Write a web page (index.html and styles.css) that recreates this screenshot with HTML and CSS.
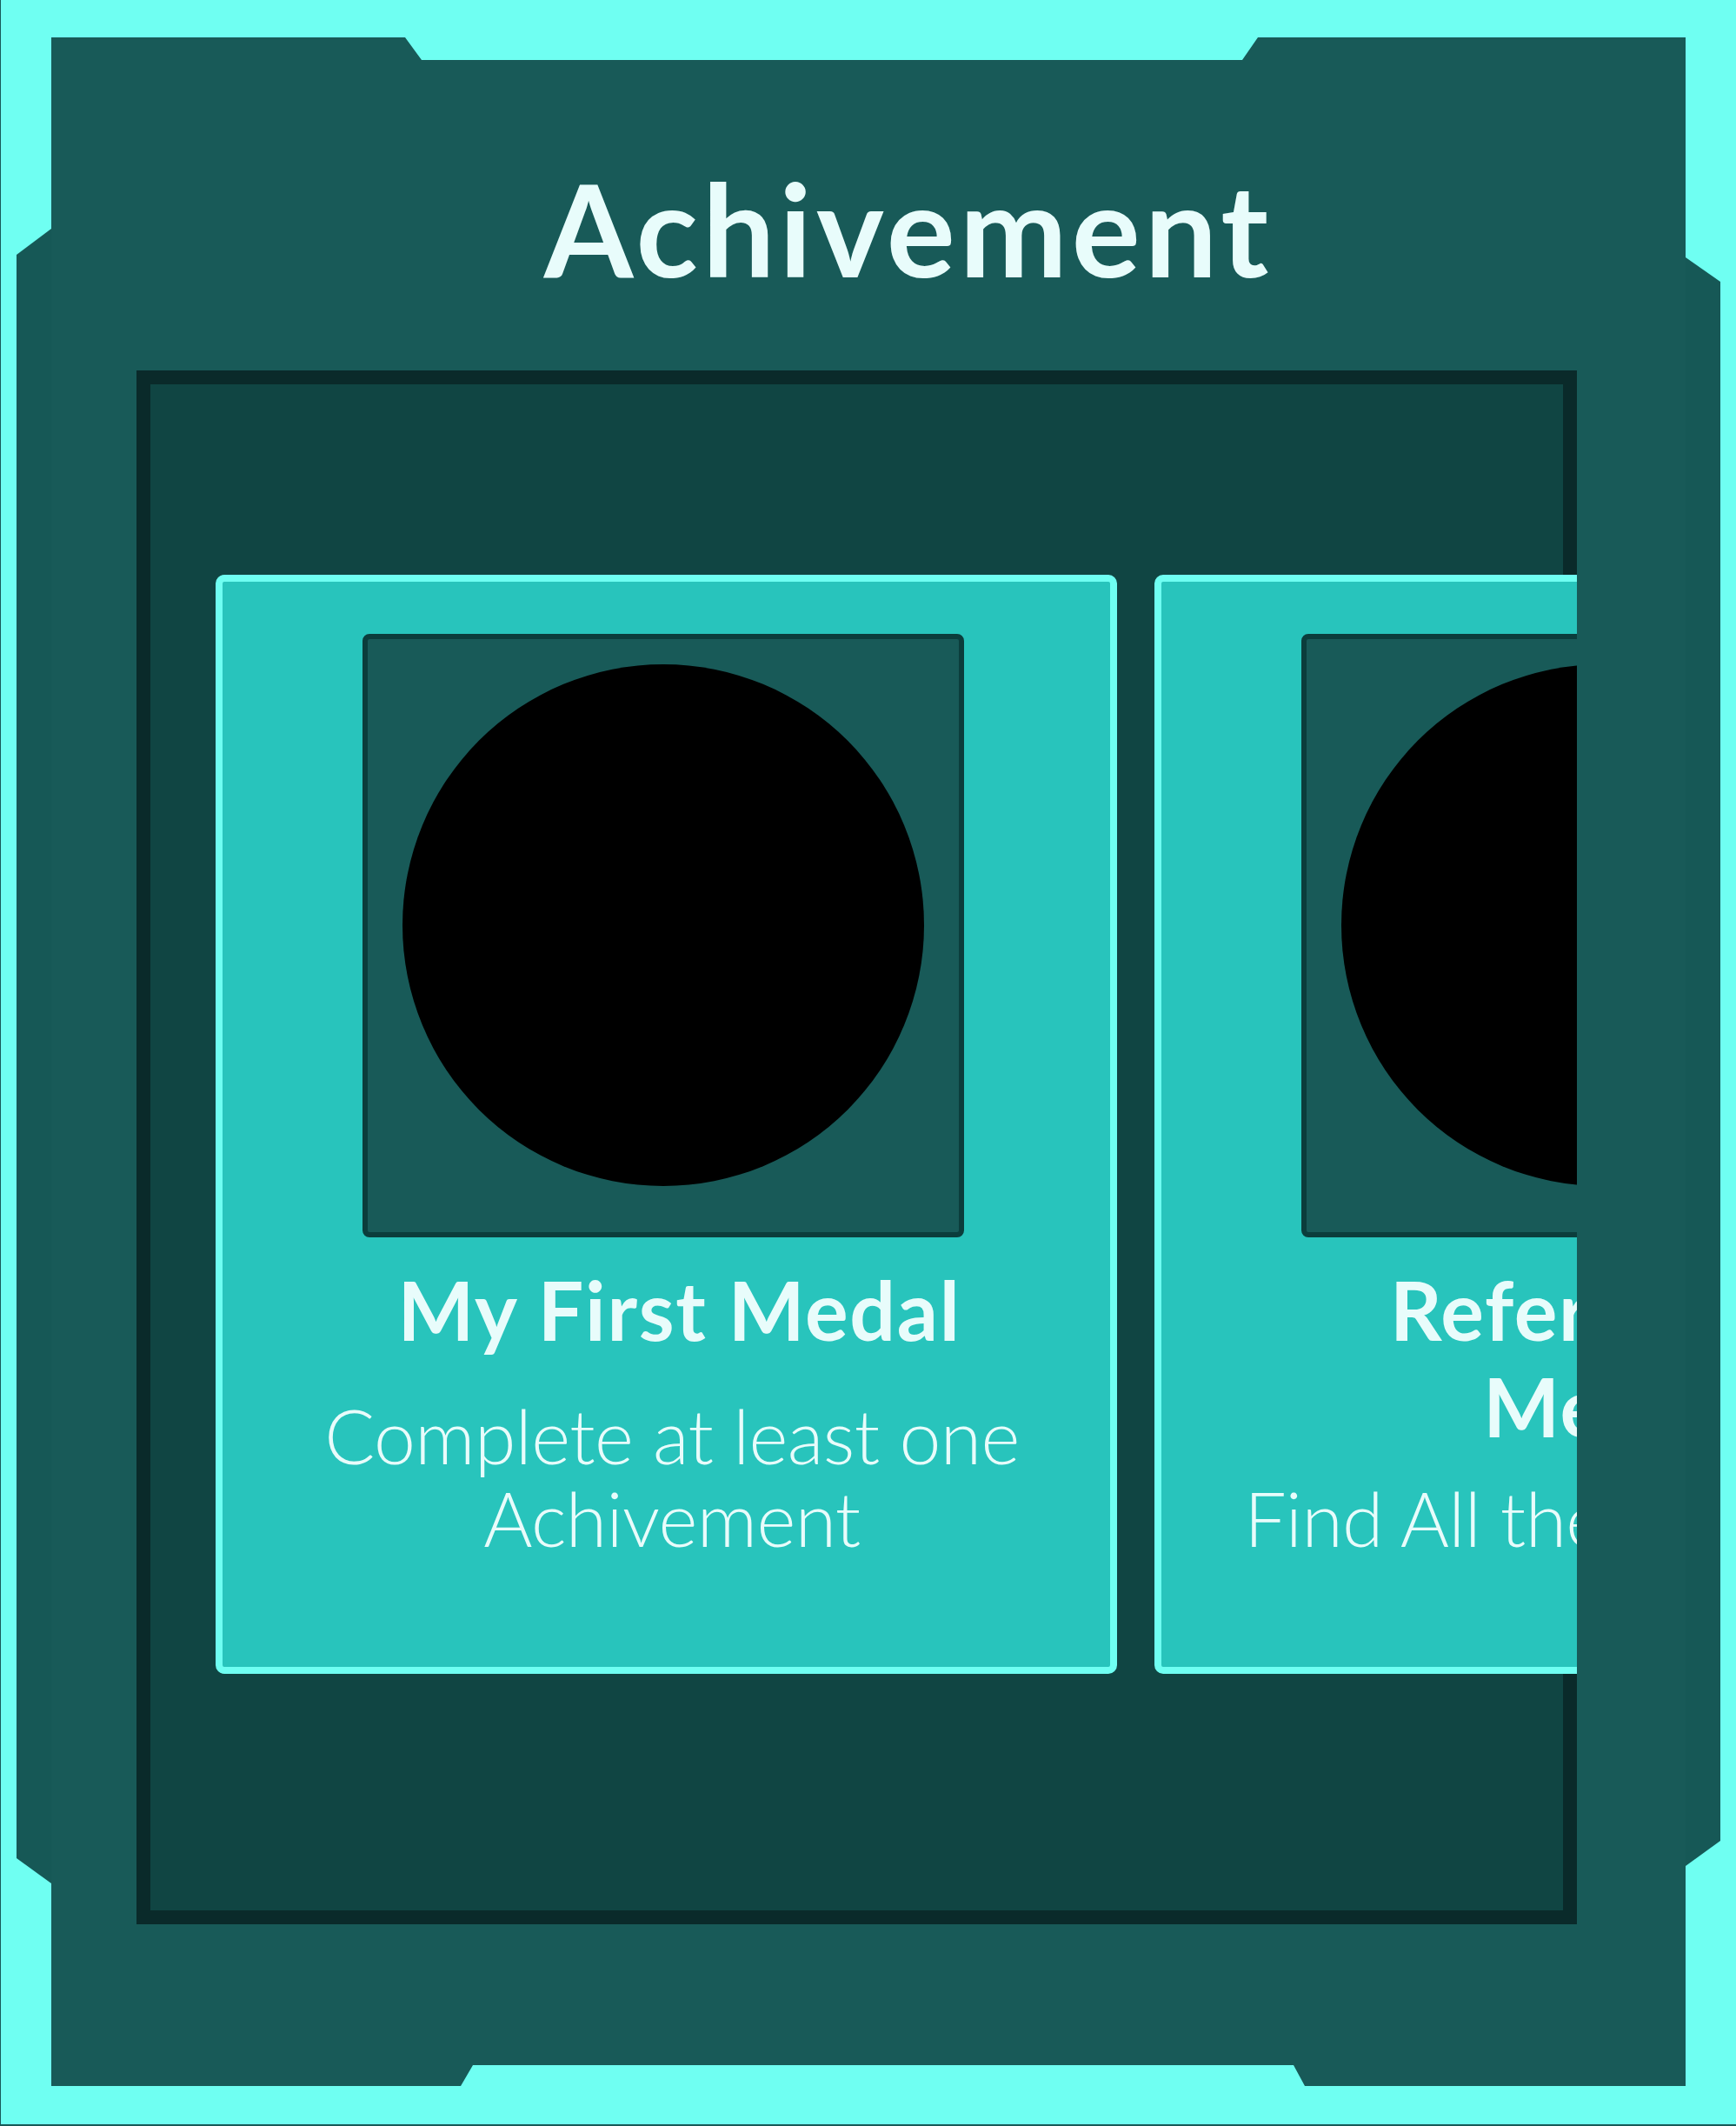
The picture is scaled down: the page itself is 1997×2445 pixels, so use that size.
FILE: index.html
```html
<!DOCTYPE html>
<html lang="en">
<head>
<meta charset="utf-8">
<title>Achivement</title>
<link rel="stylesheet" href="styles.css">
</head>
<body>
  <div class="screen">
    <div class="frame">
      <div class="wing wing-left"></div>
      <main class="panel">
        <h1 class="title">Achivement</h1>
        <section class="vault">
          <div class="track">
            <article class="card">
              <div class="medal-box"><div class="medal"></div></div>
              <div class="card-body">
                <h2 class="card-title">My First Medal</h2>
                <p class="card-desc">Complete at least one Achivement</p>
              </div>
            </article>
            <article class="card">
              <div class="medal-box"><div class="medal"></div></div>
              <div class="card-body">
                <h2 class="card-title">Refer Friend Medals</h2>
                <p class="card-desc">Find All the Referral Kit</p>
              </div>
            </article>
          </div>
        </section>
      </main>
      <div class="wing wing-right"></div>
    </div>
  </div>
</body>
</html>
```
FILE: styles.css
```css
html, body {
  margin: 0;
  padding: 0;
}

body {
  width: 1997px;
  height: 2445px;
  overflow: hidden;
  background: #6ffff2;
  font-family: Lato, "Open Sans", "Liberation Sans", sans-serif;
  color: #e8fcfb;
}

.screen {
  height: 2445px;
  box-sizing: border-box;
  border-left: 1px solid #185a58;
  border-bottom: 2px solid #185a58;
  padding: 43px 0 0 18px;
}

.frame {
  display: flex;
  align-items: flex-start;
}

.wing {
  flex: 0 0 auto;
  background: #165856;
}

.wing-left {
  width: 40px;
  height: 1903px;
  margin-top: 220px;
  clip-path: polygon(100% 0, 0 30px, 0 calc(100% - 29px), 100% 100%);
}

.wing-right {
  width: 40px;
  height: 1850px;
  margin-top: 253px;
  clip-path: polygon(0 0, 100% 28px, 100% calc(100% - 29px), 0 100%);
}

.panel {
  flex: 0 0 auto;
  width: 1880px;
  height: 2356px;
  background: #185a58;
  display: flex;
  flex-direction: column;
  clip-path: polygon(0 0, 407px 0, 426px 26px, 1370px 26px, 1388px 0, 100% 0,
                     100% 100%, 1442px 100%, 1429px 2332px, 485px 2332px, 471px 100%, 0 100%);
}

.title {
  margin: 0;
  padding: 131px 0 0 92px;
  font-size: 148px;
  line-height: 1.2;
  font-weight: 700;
  letter-spacing: 5px;
  text-align: center;
}

.vault {
  margin: 74px 0 0 98px;
  width: 1657px;
  height: 1787px;
  box-sizing: border-box;
  padding: 235px 0 0 91px;
  background: #104543;
  box-shadow: inset 0 0 0 16px #0a2a2a;
  overflow: hidden;
}

.track {
  display: flex;
  gap: 43px;
}

.card {
  flex: 0 0 auto;
  width: 1037px;
  height: 1264px;
  box-sizing: border-box;
  border: 8px solid #6ffff2;
  border-radius: 10px;
  background: #28c4bc;
  padding: 60px 0 124px;
  display: flex;
  flex-direction: column;
}

.medal-box {
  width: 692px;
  height: 694px;
  box-sizing: border-box;
  margin-left: 161px;
  padding-top: 29px;
  border: 6px solid #0b3d3c;
  border-radius: 8px;
  background: #185a58;
  display: flex;
  justify-content: center;
  align-items: flex-start;
}

.medal {
  width: 600px;
  height: 600px;
  border-radius: 50%;
  background: #000;
}

.card-body {
  flex: 1;
  display: flex;
  flex-direction: column;
  align-items: center;
  padding-top: 28px;
}

.card-title {
  margin: 0;
  max-width: 670px;
  padding-left: 30px;
  font-size: 93px;
  line-height: 111px;
  font-weight: 700;
  letter-spacing: 1.7px;
  text-align: center;
}

.card-desc {
  margin: auto 0 0;
  padding-left: 13px;
  font-size: 86px;
  line-height: 95px;
  font-weight: 300;
  letter-spacing: -0.6px;
  text-align: center;
}
```
